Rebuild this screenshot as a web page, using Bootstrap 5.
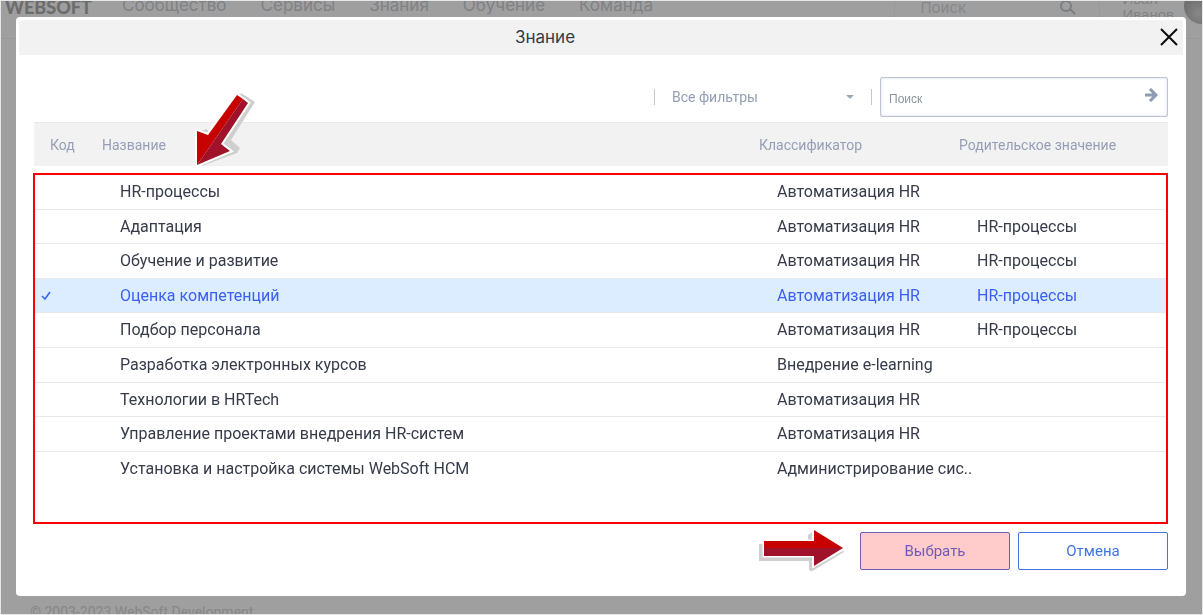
<!DOCTYPE html>
<html lang="ru">
<head>
<meta charset="utf-8">
<meta name="viewport" content="width=device-width, initial-scale=1">
<title>Знание</title>
<link href="https://cdn.jsdelivr.net/npm/bootstrap@5.3.0/dist/css/bootstrap.min.css" rel="stylesheet">
<style>
  body { font-family: Roboto, "Liberation Sans", sans-serif; font-size: 16px; color: #353b48; }
  .portal { background: #9f9f9f; border: 1px solid #e7e7e7; color: #808285; overflow: hidden; }
  .portal a { color: inherit; text-decoration: none; }
  .portal-head { height: 38px; border-bottom: 1px solid #999; font-family: Inter, sans-serif; font-size: 17px; line-height: 9px; }
  .brand { font: 900 18px/12px Lato, sans-serif; width: 86px; margin-left: 4px; color: #6c6d6e !important; }
  .portal-menu { gap: 34px; margin-left: 31px; }
  .portal-search { width: 206px; padding: 0 23px 0 25px; margin-right: 4px; font-size: 15px; border-left: 1px solid #999; border-right: 1px solid #999; }
  .portal-search input { width: 100px; height: 12px; line-height: 12px; padding: 0; border: 0; background: none; color: inherit; }
  .portal-search input::placeholder { color: #86888b; }
  .portal-user { height: 12px; margin-left: 18px; font: 15px/16px "Liberation Sans", sans-serif; }
  .avatar { width: 36px; height: 36px; flex: none; margin: -13px -18px 0 10px; border-radius: 50%; background: radial-gradient(circle at 40% 70%, #888, #6d6d6d 50%, #606060); }
  .portal-foot { padding-left: 29px; height: 12px; line-height: 20px; font-size: 14px; color: #868686; }

  .modal { padding: 17px 17px 19px 16px; }
  .modal-dialog { max-width: none; height: 100%; margin: 0; }
  .modal-content { height: 100%; border: 3px solid #fff; border-radius: 4px; color: inherit; }
  .modal-header { background: #f2f2f2; height: 35px; padding: 0; border: 0; border-radius: 3px 3px 0 0; }
  .modal-title { font-family: Inter, sans-serif; font-size: 17px; line-height: 35px; font-weight: 400; padding-right: 112px; }
  .close-x { right: 4px; top: 7px; }
  .modal-body { padding: 22px 15px; min-height: 0; }
  .filters { height: 40px; gap: 8px; }
  .filter-box { width: 218px; height: 16px; border: solid #c3c7d2; border-width: 0 1px; }
  .filter-box select { width: 100%; height: 16px; padding: 0 17px; border: 0; border-radius: 0; font-size: 14px; line-height: 16px; color: #949fb4;
    background-color: #fff; background-position: right 17px center; background-size: 8px 4px;
    background-image: url("data:image/svg+xml,%3csvg xmlns='http://www.w3.org/2000/svg' viewBox='0 0 8 4'%3e%3cpath d='M0 0h8L4 4z' fill='%23a0a7b5'/%3e%3c/svg%3e"); }
  .find-box { width: 288px; height: 40px; border: 1px solid #bfc2d2; border-radius: 2px; box-shadow: inset 0 0 3px #d3d6e2; }
  .find-box input { height: 38px; padding: 4px 0 0 8px; border: 0; background: none; font: 12px/16px "Liberation Sans", sans-serif; box-shadow: none; }
  .find-box input::placeholder { color: #8c949e; }
  .find-box button { padding: 0 9px 6px 0; line-height: 1; }

  .list-area { margin-top: 5px; min-height: 0; }
  .list-area table { table-layout: fixed; margin: 0; color: inherit; border-collapse: separate; border-spacing: 0; }
  .list-area th { height: 44px; padding: 0 0 0 16px; background: #f2f2f2; border: 0; border-top: 1px solid #e8e8e8; font-size: 14px; line-height: 20px; font-weight: 400; color: #959eb6; vertical-align: middle; white-space: nowrap; }
  .list-area td { height: 35px; padding: 0 0 0 34px; border: 0; border-bottom: 1px solid #e8e8e8; font-size: 16px; line-height: 20px; vertical-align: middle; white-space: nowrap; color: inherit; background: none; }
  .list-area tr:nth-child(5n+2) td, .list-area tr:nth-child(5n+4) td { height: 34px; }
  .list-area tr:last-child td { border-bottom: 0; }
  .list-area td:first-child { padding-left: 7px; }
  .list-area .gap-row td { height: 9px; border: 0; line-height: 0; }
  .list-area .chosen td { background: #dcedff; color: #3b5ff0; }
  .frame { inset: 51px 0 0 -1px; border: 2px solid #f00; pointer-events: none; }
  .arrow-down { left: 161px; top: -30px; }

  .modal-footer { padding: 8px 15px 23px; border: 0; gap: 8px; }
  .modal-footer > * { margin: 0; }
  .modal-footer .btn { width: 150px; height: 38px; padding: 0; border-radius: 2px; font-size: 15px; line-height: 20px; }
  .btn-pick { background: #ffcccb; border: 1px solid #6b5cb8; color: #6b5cb8; }
  .btn-cancel { background: #fff; border: 1px solid #3f74dc; color: #3f74dc; }
  .modal-footer .arrow-right { margin: -3px 4px -3px 0; }
</style>
</head>
<body>
<div class="portal d-flex flex-column vh-100">
  <header class="portal-head d-flex align-items-start">
    <a class="brand" href="#">WEBSOFT</a>
    <nav class="portal-menu d-flex flex-grow-1">
      <a href="#">Сообщество</a><a href="#">Сервисы</a><a href="#">Знания</a><a href="#">Обучение</a><a href="#">Команда</a>
    </nav>
    <form class="portal-search d-flex justify-content-between h-100">
      <input type="search" placeholder="Поиск" aria-label="Поиск по порталу">
      <svg width="18" height="16" viewBox="0 0 18 16" fill="none" stroke="#7b7f84" stroke-width="2"><circle cx="8" cy="5" r="5"/><path d="m12 8 5 5"/></svg>
    </form>
    <div class="portal-user d-flex align-items-center"><span>Иван<br>Иванов</span></div>
    <div class="avatar"></div>
  </header>
  <main class="flex-grow-1"></main>
  <footer class="portal-foot">© 2003-2023 WebSoft Development</footer>
</div>

<div class="modal d-block" role="dialog" aria-labelledby="dlg-title">
  <div class="modal-dialog">
    <div class="modal-content">
      <div class="modal-header position-relative justify-content-center">
        <h1 class="modal-title" id="dlg-title">Знание</h1>
        <button type="button" class="close-x btn p-0 border-0 lh-1 position-absolute" aria-label="Закрыть">
          <svg class="d-block" width="20" height="20" viewBox="0 0 20 20" fill="none" stroke="#0c0c0c" stroke-width="2"><path d="m2 2 16 16M18 2 2 18"/></svg>
        </button>
      </div>
      <div class="modal-body pb-0 d-flex flex-column">
        <div class="filters d-flex justify-content-end align-items-center">
          <div class="filter-box d-flex">
            <select class="form-select" aria-label="Фильтр"><option>Все фильтры</option></select>
          </div>
          <div class="find-box d-flex align-items-center">
            <input class="form-control" type="text" placeholder="Поиск" aria-label="Поиск">
            <button type="button" class="btn border-0" aria-label="Найти">
              <svg width="13" height="14" viewBox="0 0 13 14" fill="none" stroke="#8c9ab3" stroke-width="3"><path d="M0 7h10M5 1l6 6-6 6"/></svg>
            </button>
          </div>
        </div>
        <div class="list-area position-relative flex-grow-1">
          <table class="table">
            <colgroup><col style="width:52px"><col><col style="width:200px"><col style="width:225px"></colgroup>
            <thead><tr><th>Код</th><th>Название</th><th>Классификатор</th><th>Родительское значение</th></tr></thead>
            <tbody class="gap-row" aria-hidden="true"><tr><td colspan="4"></td></tr></tbody>
            <tbody>
              <tr><td></td><td>HR-процессы</td><td>Автоматизация HR</td><td></td></tr>
              <tr><td></td><td>Адаптация</td><td>Автоматизация HR</td><td>HR-процессы</td></tr>
              <tr><td></td><td>Обучение и развитие</td><td>Автоматизация HR</td><td>HR-процессы</td></tr>
              <tr class="chosen"><td><svg class="d-block" width="10" height="10" viewBox="0 0 10 10" fill="none" stroke="#3b66ee" stroke-width="1.6"><path d="m1 5 3 3 5-7"/></svg></td><td>Оценка компетенций</td><td>Автоматизация HR</td><td>HR-процессы</td></tr>
              <tr><td></td><td>Подбор персонала</td><td>Автоматизация HR</td><td>HR-процессы</td></tr>
              <tr><td></td><td>Разработка электронных курсов</td><td>Внедрение e-learning</td><td></td></tr>
              <tr><td></td><td>Технологии в HRTech</td><td>Автоматизация HR</td><td></td></tr>
              <tr><td></td><td>Управление проектами внедрения HR-систем</td><td>Автоматизация HR</td><td></td></tr>
              <tr><td></td><td>Установка и настройка системы WebSoft HCM</td><td>Администрирование сис..</td><td></td></tr>
            </tbody>
          </table>
          <div class="frame position-absolute"></div>
          <svg class="arrow-down position-absolute" width="62" height="76" viewBox="0 0 62 76">
            <path d="m46 1 14 9-24 38 9 8-3 5-35 13 22-38z" fill="#cfcfcf"/>
            <path d="m7 39 4-2 5 4-4 5z" fill="#cfcfcf"/>
            <path d="m42 3 11 8-27 41 9 7L2 73V39l11 4z" fill="#fff" stroke="#fff" stroke-width="4"/>
            <path d="m42 3 6 4L2 73V39l11 4z" fill="#c70000"/>
            <path d="m48 7 5 4-27 41 9 7L2 73z" fill="#a01229"/>
          </svg>
        </div>
      </div>
      <div class="modal-footer">
        <svg class="arrow-right" width="90" height="44" viewBox="0 0 90 44">
          <path d="M1 15h4v12h49v12l31-18 1 2-30 18q-5 3-5-2v-7H1zM50 11V6l4-3v8z" fill="#cfcfcf"/>
          <path d="M6 12h50V1l29 19-29 17V27H6z" fill="#fff" stroke="#fff" stroke-width="3"/>
          <path d="M6 12h50V1l29 18H6z" fill="#c70000"/>
          <path d="M6 19h79L56 37V27H6z" fill="#a01229"/>
        </svg>
        <button type="button" class="btn btn-pick">Выбрать</button>
        <button type="button" class="btn btn-cancel">Отмена</button>
      </div>
    </div>
  </div>
</div>
<script src="https://cdn.jsdelivr.net/npm/bootstrap@5.3.0/dist/js/bootstrap.bundle.min.js"></script>
</body>
</html>
